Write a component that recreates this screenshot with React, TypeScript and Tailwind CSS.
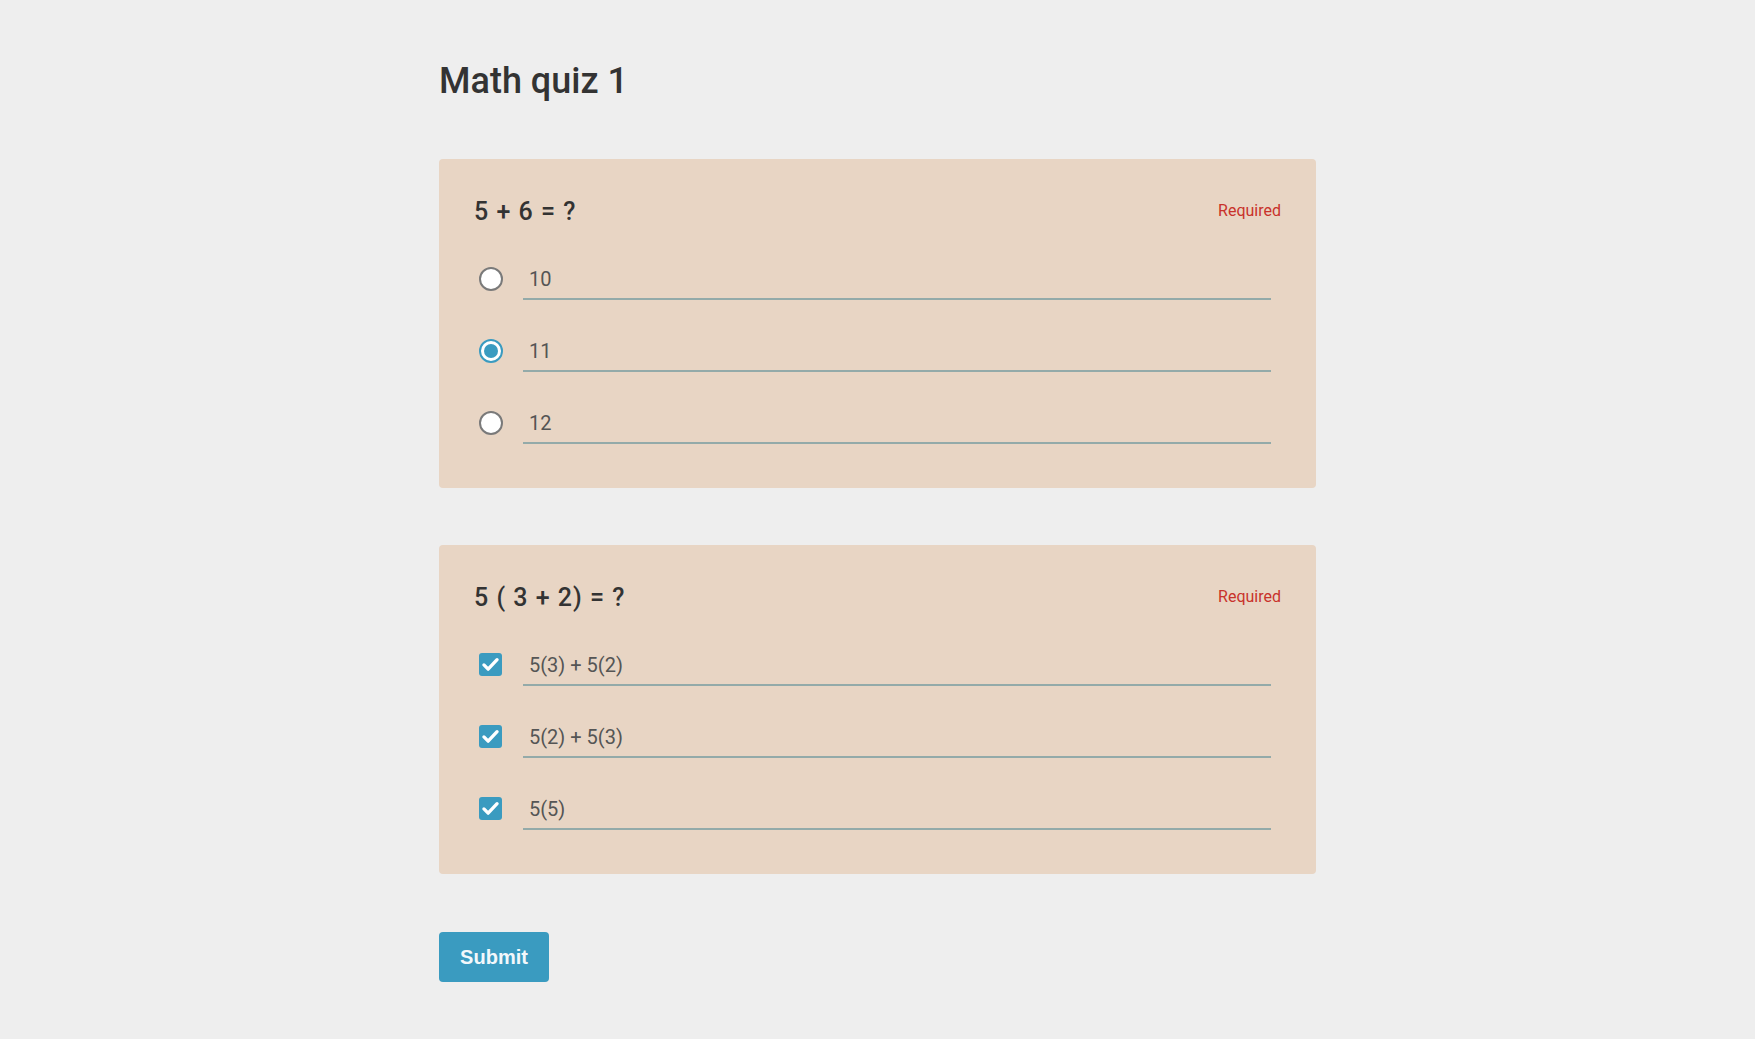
import React from "react";

const font = { fontFamily: "Roboto, 'Noto Sans', sans-serif" };

function Radio({ checked }: { checked?: boolean }) {
  if (checked) {
    return (
      <div className="w-[24px] h-[24px] rounded-full border-2 border-[#3a9bc0] bg-white flex items-center justify-center shrink-0">
        <div className="w-[14px] h-[14px] rounded-full bg-[#3a9bc0]" />
      </div>
    );
  }
  return <div className="w-[24px] h-[24px] rounded-full border-2 border-[#7a7a7a] bg-white shrink-0" />;
}

function Check() {
  return (
    <div className="w-[23px] h-[23px] rounded-[3px] bg-[#3a9bc0] flex items-center justify-center shrink-0">
      <svg width="21" height="21" viewBox="0 0 24 24" fill="none">
        <path d="M4.5 12.5l4.8 4.8L19.5 6.5" stroke="white" strokeWidth="3.8" strokeLinecap="round" strokeLinejoin="round" />
      </svg>
    </div>
  );
}

function Row({ control, label }: { control: React.ReactNode; label: string }) {
  return (
    <div className="flex items-start">
      <div className="ml-[5px] mt-[-1px] w-[25px] flex">{control}</div>
      <div className="ml-[19px] w-[748px] border-b-2 border-[#93aaa9] pb-[6px] pl-[6px] text-[20px] leading-[24px] text-[#555]">
        <span className="relative top-[-1px]">{label}</span>
      </div>
    </div>
  );
}

function Card({ question, children }: { question: string; children: React.ReactNode }) {
  return (
    <div className="bg-[#e8d5c4] rounded-[4px] pt-[37px] pb-[44px] pl-[35px] pr-[35px] flex flex-col gap-10">
      <div className="flex items-start justify-between">
        <div className="text-[25px] leading-[32px] font-medium tracking-[1px] text-[#333]">{question}</div>
        <div className="mt-[5px] text-[16px] leading-[20px] text-[#c8322b]">Required</div>
      </div>
      {children}
    </div>
  );
}

export default function App() {
  return (
    <div className="min-h-screen bg-[#eeeeee]" style={font}>
      <div className="w-[877px] mx-auto pt-[61px] pb-[57px]">
        <h1 className="text-[36px] leading-[40px] font-medium text-[#333]">Math quiz 1</h1>
        <div className="mt-[58px]">
          <Card question="5 + 6 = ?">
            <Row control={<Radio />} label="10" />
            <Row control={<Radio checked />} label="11" />
            <Row control={<Radio />} label="12" />
          </Card>
        </div>
        <div className="mt-[57px]">
          <Card question="5 ( 3 + 2) = ?">
            <Row control={<Check />} label="5(3) + 5(2)" />
            <Row control={<Check />} label="5(2) + 5(3)" />
            <Row control={<Check />} label="5(5)" />
          </Card>
        </div>
        <button
          className="mt-[58px] w-[110px] h-[50px] rounded-[4px] bg-[#3a9bc0] text-[#f2f8fb] text-[20px] font-bold"
          style={{ fontFamily: "'Liberation Sans', Arial, sans-serif" }}
        >
          Submit
        </button>
      </div>
    </div>
  );
}
